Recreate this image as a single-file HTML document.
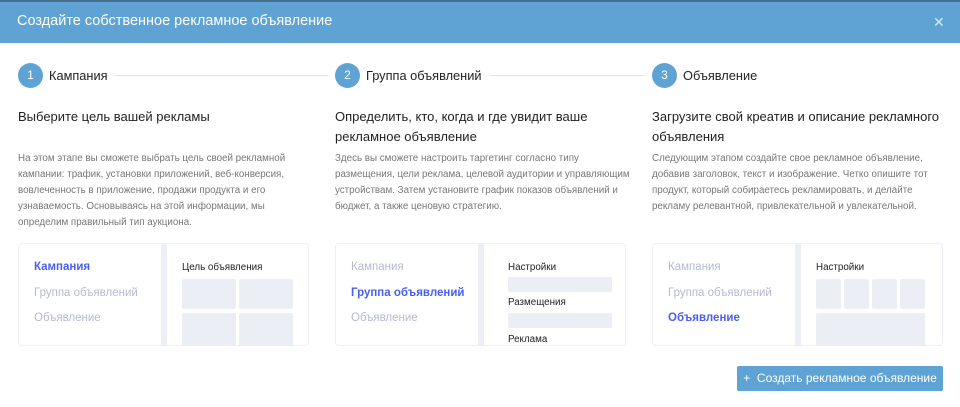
<!DOCTYPE html>
<html><head><meta charset="utf-8"><style>
*{margin:0;padding:0;box-sizing:border-box}
body{width:960px;height:407px;background:#fff;font-family:"Liberation Sans","Noto Sans CJK SC",sans-serif;position:relative;overflow:hidden}
.hdr{position:absolute;left:0;top:0;width:960px;height:43px;background:#5fa3d5;border-top:2px solid #4a6f8c}
.hdr .t{position:absolute;left:17px;top:11px;color:#fff;font-size:14.5px}
.hdr .x{position:absolute;left:933px;top:12px;color:#d6e8f5;font-size:14px}
.circ{position:absolute;top:63px;width:25px;height:25px;border-radius:50%;background:#5fa3d5;color:#fff;font-size:12px;text-align:center;line-height:25px}
.st{position:absolute;top:68px;font-size:12.8px;color:#222}
.line{position:absolute;top:75px;height:1px;background:#dde3ea}
.h{position:absolute;top:107px;font-size:13px;line-height:20px;color:#222;width:300px}
.d{position:absolute;top:151px;font-size:9.8px;line-height:16px;color:#777;width:285px}
.card{position:absolute;top:243px;width:291px;height:103px;border:1px solid #eceff5;border-radius:4px;overflow:hidden;background:#fff}
.card .dv{position:absolute;left:142px;top:0;width:6px;height:103px;background:#eceff6}
.card .l{position:absolute;left:15px;font-size:11.5px;color:#b6b9d0}
.card .a{color:#4a5ff0;font-weight:bold}
.card .rt{position:absolute;font-size:9.8px;color:#222}
.bx{position:absolute;background:#eceef5;border-radius:2px}
.btn{position:absolute;left:737px;top:366px;width:206px;height:25px;background:#5fa3d5;border-radius:2px;color:#fff;font-size:12px;line-height:25px;text-align:center}
</style></head><body>
<div class="hdr"><div class="t">Создайте собственное рекламное объявление</div><div class="x">✕</div></div>

<div class="circ" style="left:18px">1</div><div class="st" style="left:49px">Кампания</div><div class="line" style="left:115px;width:213px"></div>
<div class="circ" style="left:335px">2</div><div class="st" style="left:366px">Группа объявлений</div><div class="line" style="left:490px;width:155px"></div>
<div class="circ" style="left:652px">3</div><div class="st" style="left:683px">Объявление</div>

<div class="h" style="left:18px">Выберите цель вашей рекламы</div>
<div class="h" style="left:335px">Определить, кто, когда и где увидит ваше рекламное объявление</div>
<div class="h" style="left:652px;width:295px">Загрузите свой креатив и описание рекламного объявления</div>

<div class="d" style="left:18px">На этом этапе вы сможете выбрать цель своей рекламной кампании: трафик, установки приложений, веб-конверсия, вовлеченность в приложение, продажи продукта и его узнаваемость. Основываясь на этой информации, мы определим правильный тип аукциона.</div>
<div class="d" style="left:335px;width:305px">Здесь вы сможете настроить таргетинг согласно типу размещения, цели реклама, целевой аудитории и управляющим устройствам. Затем установите график показов объявлений и бюджет, а также ценовую стратегию.</div>
<div class="d" style="left:652px;width:280px">Следующим этапом создайте свое рекламное объявление, добавив заголовок, текст и изображение. Четко опишите тот продукт, который собираетесь рекламировать, и делайте рекламу релевантной, привлекательной и увлекательной.</div>

<div class="card" style="left:18px">
<div class="dv"></div>
<div class="l a" style="top:17px">Кампания</div>
<div class="l" style="top:43px">Группа объявлений</div>
<div class="l" style="top:68px">Объявление</div>
<div class="rt" style="left:163px;top:18px">Цель объявления</div>
<div class="bx" style="left:163px;top:35px;width:54px;height:30px"></div>
<div class="bx" style="left:220px;top:35px;width:54px;height:30px"></div>
<div class="bx" style="left:163px;top:69px;width:54px;height:34px"></div>
<div class="bx" style="left:220px;top:69px;width:54px;height:34px"></div>
</div>

<div class="card" style="left:335px">
<div class="dv"></div>
<div class="l" style="top:17px">Кампания</div>
<div class="l a" style="top:43px">Группа объявлений</div>
<div class="l" style="top:68px">Объявление</div>
<div class="rt" style="left:172px;top:18px">Настройки</div>
<div class="bx" style="left:172px;top:33px;width:104px;height:15px"></div>
<div class="rt" style="left:172px;top:53px">Размещения</div>
<div class="bx" style="left:172px;top:69px;width:104px;height:15px"></div>
<div class="rt" style="left:172px;top:90px">Реклама</div>
</div>

<div class="card" style="left:652px">
<div class="dv"></div>
<div class="l" style="top:17px">Кампания</div>
<div class="l" style="top:43px">Группа объявлений</div>
<div class="l a" style="top:68px">Объявление</div>
<div class="rt" style="left:163px;top:18px">Настройки</div>
<div class="bx" style="left:163px;top:35px;width:25px;height:30px"></div>
<div class="bx" style="left:191px;top:35px;width:25px;height:30px"></div>
<div class="bx" style="left:219px;top:35px;width:25px;height:30px"></div>
<div class="bx" style="left:247px;top:35px;width:25px;height:30px"></div>
<div class="bx" style="left:163px;top:69px;width:109px;height:34px"></div>
</div>

<div class="btn">+&nbsp; Создать рекламное объявление</div>
</body></html>
